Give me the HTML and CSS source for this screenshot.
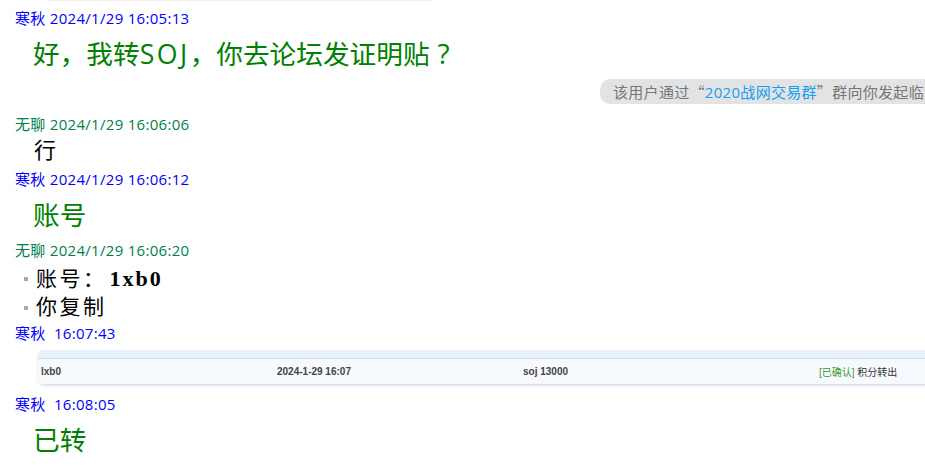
FILE: index.html
```html
<!DOCTYPE html>
<html lang="zh-CN">
<head>
<meta charset="utf-8">
<title>聊天记录</title>
<link rel="stylesheet" href="styles.css">
</head>
<body>
<div class="topline"></div>
<div class="chat">
  <div class="hdr hdr-first blue">寒秋 2024/1/29 16:05:13</div>
  <div class="big">好，我转<span class="wide">SOJ</span>，你去论坛发证明贴<span class="qmark">?</span></div>

  <div class="notice"><span class="pill">该用户通过<span class="cjk">“</span><span class="link">2020战网交易群</span><span class="cjk">”</span>群向你发起临时会话</span></div>

  <div class="hdr hdr-after-notice green">无聊 2024/1/29 16:06:06</div>
  <div class="plain">行</div>

  <div class="hdr hdr-after-plain blue">寒秋 2024/1/29 16:06:12</div>
  <div class="big">账号</div>

  <div class="hdr hdr-after-big green">无聊 2024/1/29 16:06:20</div>
  <ul class="list">
    <li><span class="item-text">账号<span class="centered">：</span><span class="latin">1xb0</span></span></li>
    <li><span class="item-text">你复制</span></li>
  </ul>

  <div class="hdr hdr-after-list blue">寒秋&nbsp; 16:07:43</div>
  <div class="card">
    <div class="card-head"></div>
    <div class="card-row">
      <span class="cell">lxb0</span>
      <span class="cell">2024-1-29 16:07</span>
      <span class="cell">soj 13000</span>
      <span class="cell cell-status"><span class="ok">[已确认]</span> 积分转出</span>
    </div>
  </div>

  <div class="hdr hdr-after-card blue">寒秋&nbsp; 16:08:05</div>
  <div class="big">已转</div>
</div>
</body>
</html>
```

FILE: styles.css
```css
html, body {
  margin: 0;
  padding: 0;
  background: #ffffff;
  overflow: hidden;
}

body {
  font-family: "Open Sans", "Noto Sans CJK SC", sans-serif;
  width: 925px;
  height: 467px;
  text-spacing-trim: space-all;
}

.topline {
  height: 1px;
  width: 386px;
  margin-left: 47px;
  background: #f0f0f0;
}

.chat {
  padding-left: 15px;
}

.hdr {
  font-size: 15px;
  line-height: 20px;
  letter-spacing: 0.3px;
  white-space: nowrap;
}

.blue { color: #0000ff; }
.green { color: #00804a; }

.hdr-first { margin-top: 7px; }
.hdr-after-notice { margin-top: 10px; }
.hdr-after-plain { margin-top: 4px; }
.hdr-after-big { margin-top: 7px; }
.hdr-after-list { margin-top: 1px; }
.hdr-after-card { margin-top: 9px; }

.big {
  font-size: 26.67px;
  line-height: 36px;
  height: 36px;
  color: #008000;
  margin-top: 8px;
  padding-left: 18px;
  white-space: nowrap;
}

.wide { letter-spacing: 2.5px; }

.qmark {
  display: inline-block;
  width: 1em;
  text-align: center;
  font-size: 28px;
  line-height: 0;
}

.centered {
  font-family: "Noto Sans CJK JP", sans-serif;
}

.cjk { font-family: "Noto Sans CJK SC", sans-serif; }

.notice {
  margin-top: 7px;
  padding-left: 585px;
  white-space: nowrap;
}

.pill {
  display: inline-block;
  background: #e2e3e5;
  color: #767676;
  font-size: 15px;
  line-height: 25px;
  height: 25px;
  padding: 0 14px 0 13px;
  border-radius: 10px;
  letter-spacing: 0.3px;
}

.link { color: #1a9cf0; }

.plain {
  font-family: "Liberation Serif", "Noto Sans CJK SC", serif;
  font-size: 22px;
  line-height: 28px;
  height: 28px;
  color: #000;
  margin-top: 3px;
  padding-left: 19px;
}

.list {
  list-style: none;
  margin: 4px 0 0 0;
  padding: 0 0 0 9px;
  font-family: "Liberation Serif", "Noto Sans CJK SC", serif;
  font-size: 21px;
  line-height: 29px;
  letter-spacing: 2.5px;
  color: #000;
}

.list li {
  display: flex;
  align-items: center;
  height: 29px;
}

.list li::before {
  content: "";
  width: 4px;
  height: 4px;
  background: #a8a8a8;
  margin-right: 8px;
  flex: none;
}

.item-text {
  white-space: nowrap;
}

.latin {
  font-size: 22px;
  font-weight: bold;
  letter-spacing: 2px;
  margin-left: 3px;
}

.card {
  margin-top: 7px;
  margin-left: 23px;
  width: 1000px;
  border-radius: 6px;
  background: #f6f9fd;
  box-shadow: 0 1px 3px rgba(160, 180, 200, 0.35);
  overflow: hidden;
}

.card-head {
  height: 8px;
  background: #e7f0fb;
  border-bottom: 1px solid #cfdcec;
}

.card-row {
  display: grid;
  grid-template-columns: 236px 246px 296px 1fr;
  height: 25px;
  align-items: center;
  padding-left: 3px;
  border-bottom: 1px solid #d3e0ef;
  font-family: "Liberation Sans", "Noto Sans CJK SC", sans-serif;
  font-size: 10px;
  font-weight: bold;
  color: #444;
  white-space: nowrap;
}

.cell-status {
  font-weight: normal;
  color: #333;
}

.ok { color: #3d9a2c; }
```
